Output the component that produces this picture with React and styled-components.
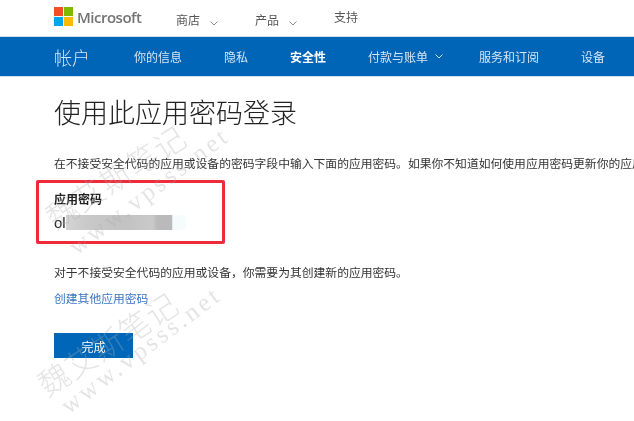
import React from 'react';
import styled, { createGlobalStyle } from 'styled-components';

const GlobalStyle = createGlobalStyle`
  html, body {
    margin: 0;
    padding: 0;
    background: #fff;
  }
  body {
    font-family: "Noto Sans CJK SC", "Liberation Sans", sans-serif;
  }
`;

const Chevron = ({ color }) => (
  <svg width="8" height="5" viewBox="0 0 8 5">
    <path d="M0.5 0.5 L4 4 L7.5 0.5" fill="none" stroke={color} strokeWidth="1" />
  </svg>
);

const MsLogo = () => (
  <svg width="19" height="19" viewBox="0 0 19 19">
    <rect width="9" height="9" fill="#f25022" />
    <rect x="10" width="9" height="9" fill="#7fba00" />
    <rect y="10" width="9" height="9" fill="#00a4ef" />
    <rect x="10" y="10" width="9" height="9" fill="#ffb900" />
  </svg>
);

const App = () => (
  <Page>
    <GlobalStyle />
    <TopBar>
      <Logo>
        <MsLogo />
        <LogoText>Microsoft</LogoText>
      </Logo>
      <TopItem $width={79} $drop={3}>
        商店
        <Chevron color="#8a8a8a" />
      </TopItem>
      <TopItem $width={79} $drop={3}>
        产品
        <Chevron color="#8a8a8a" />
      </TopItem>
      <TopItem $width={40}>支持</TopItem>
    </TopBar>

    <AccountBar>
      <AccountTitle>帐户</AccountTitle>
      <NavItem $left={43}>你的信息</NavItem>
      <NavItem $left={42}>隐私</NavItem>
      <NavItem $left={42} $active>安全性</NavItem>
      <NavItem $left={42}>
        付款与账单
        <Chevron color="#cfe2f3" />
      </NavItem>
      <NavItem $left={36}>服务和订阅</NavItem>
      <NavItem $left={42}>设备</NavItem>
    </AccountBar>

    <Main>
      <Heading>使用此应用密码登录</Heading>
      <Intro>
        在不接受安全代码的应用或设备的密码字段中输入下面的应用密码。如果你不知道如何使用应用密码更新你的应用
      </Intro>
      <PasswordBlock>
        <PasswordLabel>应用密码</PasswordLabel>
        <PasswordValue>
          ol<Smudge />
        </PasswordValue>
      </PasswordBlock>
      <Note>对于不接受安全代码的应用或设备，你需要为其创建新的应用密码。</Note>
      <CreateLink href="#">创建其他应用密码</CreateLink>
      <DoneButton>完成</DoneButton>
    </Main>

    <RedFrame />
    <Watermark $left={35} $top={160}>魏艾斯笔记</Watermark>
    <WatermarkLatin $left={52} $top={178}>www.vpsss.net</WatermarkLatin>
    <Watermark $left={27} $top={327}>魏艾斯笔记</Watermark>
    <WatermarkLatin $left={44} $top={337}>www.vpsss.net</WatermarkLatin>
  </Page>
);

const Page = styled.div`
  position: relative;
  width: 634px;
  height: 421px;
  overflow: hidden;
  background: #fff;
  filter: blur(0.35px);
`;

const TopBar = styled.header`
  display: flex;
  align-items: flex-start;
  height: 36px;
  padding-left: 54px;
  border-bottom: 1px solid #c9dff0;
`;

const Logo = styled.div`
  display: flex;
  align-items: center;
  gap: 4px;
  width: 122px;
  height: 19px;
  margin-top: 7px;
`;

const LogoText = styled.span`
  font-family: "Open Sans", "Liberation Sans", sans-serif;
  font-size: 15px;
  font-weight: 600;
  color: #737373;
  letter-spacing: -0.5px;
`;

const TopItem = styled.div`
  display: flex;
  align-items: center;
  gap: 10px;
  width: ${props => props.$width}px;
  margin-top: ${props => 8 + (props.$drop || 0)}px;
  font-size: 12px;
  line-height: 17px;
  color: #555;

  svg {
    margin-top: 7px;
  }
`;

const AccountBar = styled.nav`
  display: flex;
  align-items: center;
  height: 39px;
  padding-left: 54px;
  background: #0064b7;
  border-bottom: 1px solid #c9dff0;
`;

const AccountTitle = styled.div`
  width: 37px;
  font-size: 18px;
  font-weight: 300;
  color: #d5e6f5;
  white-space: nowrap;
`;

const NavItem = styled.div`
  display: flex;
  align-items: center;
  gap: 7px;
  margin-left: ${props => props.$left}px;
  font-size: 12px;
  font-weight: ${props => (props.$active ? 700 : 400)};
  color: ${props => (props.$active ? '#fff' : '#d5e6f5')};
  white-space: nowrap;
`;

const Main = styled.main`
  display: flex;
  flex-direction: column;
  align-items: flex-start;
  padding-left: 54px;
`;

const Heading = styled.h1`
  margin: 16px 0 0;
  font-size: 27px;
  line-height: 38px;
  font-weight: 300;
  color: #222;
  white-space: nowrap;
`;

const Intro = styled.p`
  margin: 23px 0 0;
  font-size: 11.8px;
  line-height: 17px;
  color: #333;
  white-space: nowrap;
`;

const PasswordBlock = styled.div`
  margin-top: 19px;
`;

const PasswordLabel = styled.div`
  font-size: 12px;
  line-height: 17px;
  font-weight: 700;
  color: #222;
`;

const PasswordValue = styled.div`
  display: flex;
  align-items: center;
  margin-top: 6px;
  height: 18px;
  font-family: "Liberation Sans", sans-serif;
  font-size: 15px;
  color: #222;
`;

const Smudge = styled.span`
  display: block;
  width: 120px;
  height: 15px;
  background: linear-gradient(
    90deg,
    #d4d4d4 0,
    #c8c8c8 20%,
    #c2c2c2 50%,
    #cacaca 72%,
    #bababa 76%,
    #bababa 88%,
    #f4fbfb 89%,
    #f7fcfc 100%
  );
`;

const Note = styled.p`
  margin: 32px 0 0;
  font-size: 11.8px;
  line-height: 17px;
  color: #333;
  white-space: nowrap;
`;

const CreateLink = styled.a`
  margin-top: 9px;
  font-size: 11.8px;
  line-height: 17px;
  color: #3a74c0;
  text-decoration: none;
`;

const DoneButton = styled.button`
  width: 79px;
  height: 25px;
  margin-top: 27px;
  padding: 1px 0 0;
  border: 0;
  background: #0067b8;
  color: #fff;
  font-family: inherit;
  font-size: 12px;
`;

const RedFrame = styled.div`
  position: absolute;
  left: 36px;
  top: 180px;
  width: 183px;
  height: 58px;
  border: 3px solid #ee2b3b;
  border-radius: 2px;
`;

const Watermark = styled.div`
  position: absolute;
  left: ${props => props.$left}px;
  top: ${props => props.$top}px;
  font-size: 31px;
  font-weight: 200;
  line-height: 1;
  letter-spacing: 1px;
  color: rgba(170, 170, 170, 0.32);
  white-space: nowrap;
  transform: rotate(-33deg);
  transform-origin: center;
  pointer-events: none;
`;

const WatermarkLatin = styled.div`
  position: absolute;
  left: ${props => props.$left}px;
  top: ${props => props.$top}px;
  font-family: "Liberation Serif", serif;
  font-size: 25px;
  line-height: 1;
  letter-spacing: 3.4px;
  color: rgba(170, 170, 170, 0.32);
  white-space: nowrap;
  transform: rotate(-37deg);
  transform-origin: center;
  pointer-events: none;
`;

export default App;
